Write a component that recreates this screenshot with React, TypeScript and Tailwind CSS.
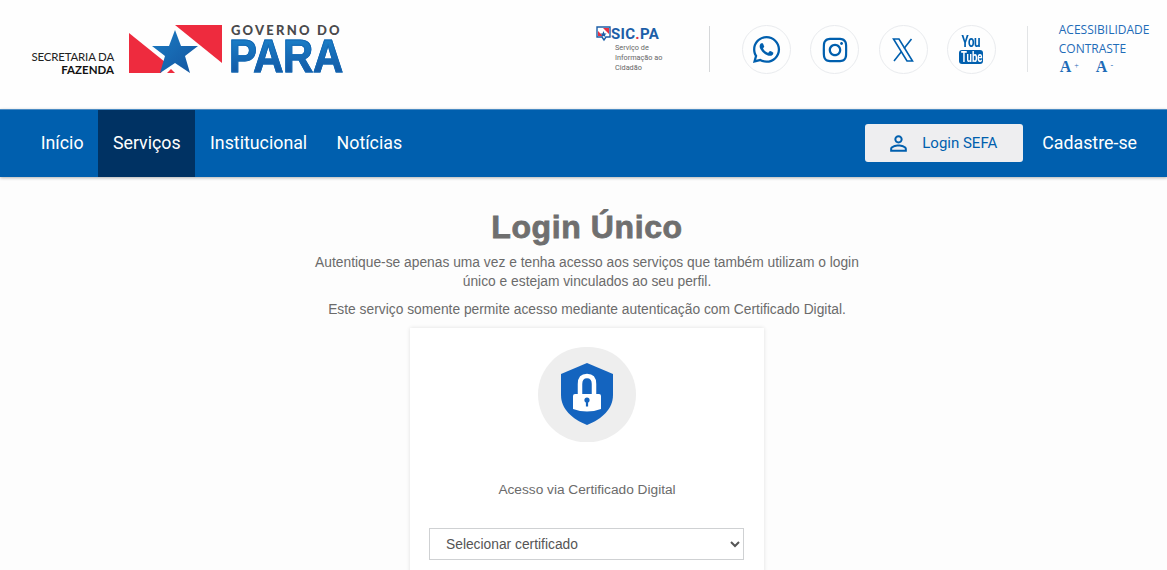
import React from "react";
import { FaWhatsapp, FaInstagram } from "react-icons/fa";
import { MdPersonOutline } from "react-icons/md";

const navItems = ["Início", "Serviços", "Institucional", "Notícias"];

const FlagLogo: React.FC = () => (
  <svg width="94" height="49" viewBox="0 0 94 49" className="shrink-0">
    <defs>
      <linearGradient id="star" x1="0" y1="0" x2="1" y2="1">
        <stop offset="0" stopColor="#1b7cc4" />
        <stop offset="1" stopColor="#14559f" />
      </linearGradient>
    </defs>
    <polygon points="46,0 93,0 93,38" fill="#ee2b3e" />
    <polygon points="0,8 0,48 32,48 36,37" fill="#ee2b3e" />
    <polygon points="38,48 46,48 42,44" fill="#ee2b3e" />
    <polygon
      points="46,5 52,21 69,21 56,31 61,48 46,38 31,48 36,31 23,21 40,21"
      fill="url(#star)"
    />
  </svg>
);

const SicFlag: React.FC = () => (
  <svg width="15" height="17" viewBox="0 0 15 17" className="shrink-0">
    <path d="M1 1h13v10h-4l-2 3-2-3H1z" fill="#fff" stroke="#1c5fa8" strokeWidth="1.4" />
    <path d="M2 2h5l6 6V2zM2 5v5h5z" fill="#e63042" />
    <polygon points="7.5,5 8.5,7.5 10.5,7.5 9,9 9.5,11 7.5,10 5.5,11 6,9 4.5,7.5 6.5,7.5" fill="#1c5fa8" />
  </svg>
);

const XIcon: React.FC = () => (
  <svg width="22" height="24" viewBox="0 0 22 24" fill="none" stroke="currentColor" strokeWidth="1.6">
    <path d="M1.5 1 H7 L20.5 23 H15 Z" />
    <path d="M19.5 1 L12 10.5 M9.5 13.5 L2 23" />
  </svg>
);

const SocialCircle: React.FC<{ children: React.ReactNode }> = ({ children }) => (
  <div className="w-[49px] h-[49px] rounded-full border border-[#e9ebee] flex items-center justify-center text-[#005fae] shrink-0">
    {children}
  </div>
);

const ShieldLock: React.FC = () => (
  <svg width="54" height="63" viewBox="0 0 54 63">
    <path
      d="M27 0 L53 11 V32 C53 46 42 56 27 62 C12 56 1 46 1 32 V11 Z"
      fill="#1464bf"
    />
    <path
      d="M20 32 V21 C20 15 23 13 27 13 C31 13 34 15 34 21 V32"
      fill="none"
      stroke="#fff"
      strokeWidth="4.5"
    />
    <path d="M13 33 Q13 31 15 31 H39 Q41 31 41 33 V46 Q27 51 13 46 Z" fill="#fff" />
    <circle cx="27" cy="37" r="2.6" fill="#1464bf" />
    <rect x="25.9" y="37" width="2.2" height="6.5" fill="#1464bf" />
  </svg>
);

export default function App() {
  return (
    <div className="h-screen overflow-hidden bg-[#fdfdfd] font-['Liberation_Sans',sans-serif]">
      {/* Top header */}
      <header className="h-[109px] bg-[#fefefe] flex items-start">
        {/* Logo */}
        <div className="flex items-start pt-[25px] pl-[31px] w-[596px] shrink-0">
          <div className="w-[83px] mt-[25px] text-right text-[#222] font-['Lato',sans-serif] text-[11.5px] leading-[13px] shrink-0 whitespace-nowrap">
            <div className="tracking-[-0.2px]">SECRETARIA DA</div>
            <div className="font-bold text-[#111]">FAZENDA</div>
          </div>
          <div className="ml-[15px]">
            <FlagLogo />
          </div>
          <div className="ml-[8px] whitespace-nowrap relative">
            <div className="text-[#4a4a4c] font-['Lato',sans-serif] font-black text-[13px] leading-[11px] tracking-[2.2px]">
              GOVERNO DO
            </div>
            <div className="origin-left scale-x-[0.89] -ml-[2px] mt-[2px] font-bold text-[47px] leading-[36px] tracking-[-0.5px] [-webkit-text-stroke:1px_#1268b4] bg-linear-to-b from-[#1a7fc8] to-[#1458a4] bg-clip-text text-transparent w-[135px]">
              PARA
            </div>
            <div className="absolute left-[107px] top-[14px] w-[3px] h-[7px] bg-[#fefefe] -skew-x-12" />
          </div>
        </div>

        {/* SIC.PA */}
        <div className="w-[114px] h-[46px] mt-[26px] shrink-0 border-r border-[#d5d7d9]">
          <div className="flex items-center h-[16px]">
            <SicFlag />
            <span className="text-[#1c5fa8] font-['Roboto',sans-serif] font-bold text-[15px] leading-[16px] tracking-[0.3px]">
              SIC<span className="text-[#e63042]">.</span>PA
            </span>
          </div>
          <div className="pl-[19px] pt-[1px] text-[#666] font-['Roboto',sans-serif] text-[7.3px] leading-[10px]">
            Serviço de
            <br />
            Informação ao
            <br />
            Cidadão
          </div>
        </div>

        {/* Social */}
        <div className="flex gap-[19.25px] mt-[25px] ml-[32px] shrink-0">
          <SocialCircle>
            <FaWhatsapp size={31} />
          </SocialCircle>
          <SocialCircle>
            <FaInstagram size={28} />
          </SocialCircle>
          <SocialCircle>
            <XIcon />
          </SocialCircle>
          <SocialCircle>
            <div className="flex flex-col items-center font-['Roboto',sans-serif] font-bold">
              <span className="text-[16px] leading-[14px] tracking-[-0.6px] scale-x-[0.72]">You</span>
              <span className="mt-[1px] w-[24px] h-[14px] flex items-center justify-center bg-[#005fae] text-white rounded-[3px] text-[14px] leading-[14px]">
                <span className="inline-block scale-x-[0.68]">Tube</span>
              </span>
            </div>
          </SocialCircle>
        </div>

        {/* Acessibilidade */}
        <div className="h-[46px] mt-[26px] ml-[31px] pl-[31px] border-l border-[#e2e4e6] text-[#1f6cb8] font-['Open_Sans',sans-serif] text-[12px] whitespace-nowrap">
          <div className="leading-[19px] -mt-[6px]">ACESSIBILIDADE</div>
          <div className="leading-[19px]">CONTRASTE</div>
          <div className="flex gap-[17px] leading-[18px] font-['Liberation_Serif',serif] font-bold text-[16px] pl-[1px]">
            <span>
              A<sup className="text-[8px] font-normal ml-[3px]">+</sup>
            </span>
            <span>
              A<sup className="text-[8px] font-normal ml-[3px]">-</sup>
            </span>
          </div>
        </div>
      </header>

      {/* Navigation */}
      <nav className="h-[68px] bg-[#005fae] border-t border-[#4c8cc4] shadow-[0_1px_3px_rgba(0,0,0,0.3)] flex items-stretch pl-[26px] pr-[16px] font-['Roboto',sans-serif] text-white text-[17.8px]">
        {navItems.map((item) => (
          <a
            key={item}
            className={`flex items-center pb-[1px] px-[14.7px] ${item === "Serviços" ? "bg-[#003263]" : ""}`}
          >
            {item}
          </a>
        ))}
        <button className="ml-auto self-center -mt-[2px] w-[158px] h-[38px] pt-[2px] bg-[#eeeef0] rounded-[3px] flex items-center justify-start pl-[21px] gap-[11px] text-[#005fae] text-[15px]">
          <MdPersonOutline size={25} />
          Login SEFA
        </button>
        <a className="flex items-center pb-[1px] ml-[19px] mr-[14px]">Cadastre-se</a>
      </nav>

      {/* Content */}
      <main className="flex flex-col items-center pl-[7px] text-[#6b6b6b]">
        <h1 className="mt-[31px] text-[32px] leading-[38px] font-bold text-[#6f6f6f] tracking-[0.6px] [-webkit-text-stroke:0.8px_#6f6f6f]">
          Login Único
        </h1>
        <p className="mt-[7px] w-[560px] text-center text-[13.8px] leading-[19px]">
          Autentique-se apenas uma vez e tenha acesso aos serviços que também utilizam o login
          <br />
          único e estejam vinculados ao seu perfil.
        </p>
        <p className="mt-[9px] text-center text-[13.8px] leading-[19px]">
          Este serviço somente permite acesso mediante autenticação com Certificado Digital.
        </p>

        <div className="mt-[9px] w-[354px] h-[300px] bg-white shadow-[0_0_4px_rgba(0,0,0,0.12)] flex flex-col items-center">
          <div className="mt-[19px] w-[98px] h-[95px] rounded-full bg-[#eeeeee] flex items-center justify-center">
            <ShieldLock />
          </div>
          <div className="mt-[40px] text-[13.7px] leading-[16px] text-[#6b6b6b]">
            Acesso via Certificado Digital
          </div>
          <select className="mt-[30px] self-start ml-[19px] w-[315px] h-[32px] border border-[#cfd1d3] bg-white pl-[12px] text-[13.8px] text-[#555]">
            <option>Selecionar certificado</option>
          </select>
        </div>
      </main>
    </div>
  );
}
